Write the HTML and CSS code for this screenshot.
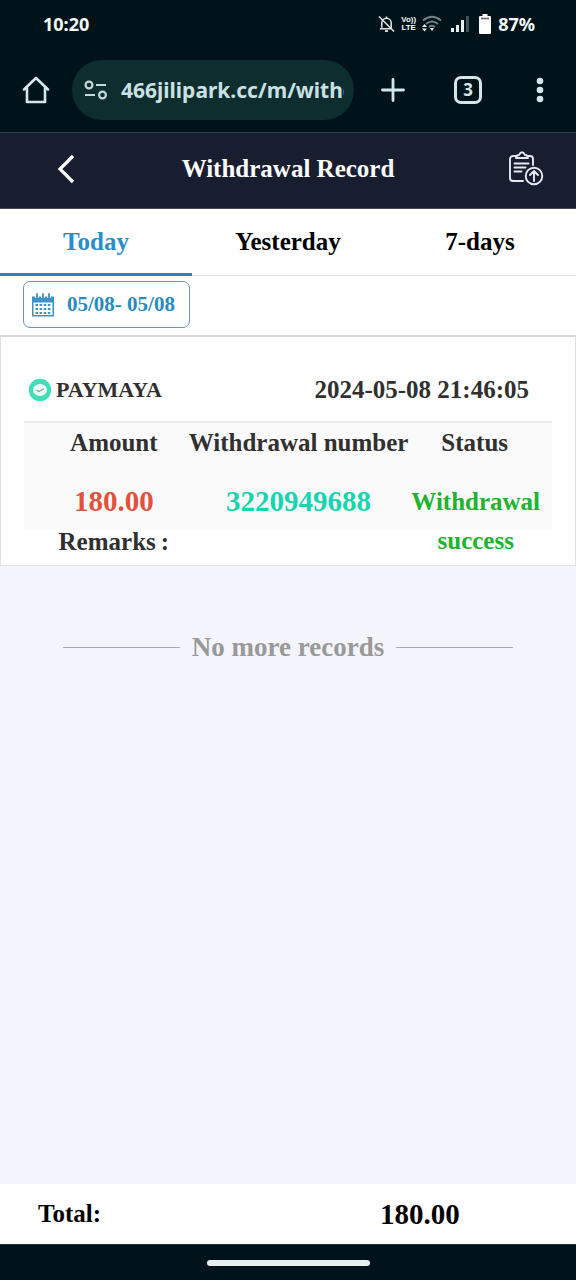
FILE: index.html
```html
<!DOCTYPE html>
<html lang="en">
<head>
<meta charset="utf-8">
<meta name="viewport" content="width=device-width, initial-scale=1">
<title>Withdrawal Record</title>
<link rel="stylesheet" href="styles.css">
</head>
<body>
<div class="status-bar">
  <span class="clock">10:20</span>
  <div class="status-icons">
    <svg width="17" height="18" viewBox="0 0 18 18" fill="none" stroke="#dfe9ea" stroke-width="1.6"><path d="M4 13V8a5 5 0 0 1 10 0v5M2 14h13M9 1v2M1 1l16 16"/><path d="M7.500 16.500h3" stroke-width="2"/></svg>
    <span class="volte"><span>Vo))</span><span>LTE</span></span>
    <svg class="wifi" width="20" height="18" viewBox="0 0 20 18" fill="none" stroke="#718086" stroke-width="1.800"><path d="M1 5.500Q10-2 19 5.500M4 9q6-5 12 0M7 12q3-2.500 6 0"/><path d="M0 12l2.500-3L5 12zM0 13.500h5L2.500 16.500zM8 13h4l-2 3z" fill="#e8f1f2" stroke="none"/></svg>
    <svg class="signal" width="18" height="16" viewBox="0 0 18 16" fill="#e8f1f2"><path d="M0 12h3v4H0zM5 9h3v7H5zM10 4h3v12h-3z"/><path d="M15 0h3v16h-3z" fill="#435158"/></svg>
    <svg class="battery" width="12" height="20" viewBox="0 0 12 20"><path d="M3.500 0h5v2H11a1 1 0 0 1 1 1v16a1 1 0 0 1-1 1H1a1 1 0 0 1-1-1V3a1 1 0 0 1 1-1h2.500z" fill="#fff"/><path d="M2 4.500h8" stroke="#58666b" stroke-width="1.500"/></svg>
    <span class="charge">87%</span>
  </div>
</div>

<div class="browser-bar">
  <button class="tool" aria-label="Home"><svg width="28" height="28" viewBox="0 0 28 28" fill="none" stroke="#d3e6ea" stroke-width="2.600" stroke-linejoin="round" stroke-linecap="round"><path d="M5 11.500L2 13.500 14 2l12 11.500-3-2M5 11.500V26h18V11.500"/></svg></button>
  <div class="address">
    <svg width="24" height="20" viewBox="0 0 24 20" fill="none" stroke="#c4dad9" stroke-width="2.200"><circle cx="5" cy="5" r="3.400"/><path d="M12 5h10M1 15h10"/><circle cx="18.500" cy="15" r="3.400"/></svg>
    <input class="url" type="text" aria-label="Address" value="466jilipark.cc/m/withdraw">
  </div>
  <button class="tool" aria-label="New tab"><svg width="24" height="24" viewBox="0 0 24 24" stroke="#d3e6ea" stroke-width="2.800" stroke-linecap="round"><path d="M12 1.500v21M1.500 12h21"/></svg></button>
  <button class="tool" aria-label="Open tabs"><span class="tab-count">3</span></button>
  <button class="tool" aria-label="Menu"><svg width="8" height="26" viewBox="0 0 8 26" fill="#d3e6ea"><circle cx="4" cy="4" r="3.300"/><circle cx="4" cy="13" r="3.300"/><circle cx="4" cy="22" r="3.300"/></svg></button>
</div>

<header class="page-head">
  <button class="head-button head-back" aria-label="Back"><svg width="20" height="30" viewBox="0 0 20 30" fill="none" stroke="#fff" stroke-width="3.200"><path d="M17 2L4 15l13 13"/></svg></button>
  <h1 class="title">Withdrawal Record</h1>
  <button class="head-button head-export" aria-label="Export record"><svg width="36" height="36" viewBox="0 0 36 36" fill="none" stroke="#e6e8f2" stroke-width="1.900" stroke-linecap="round" stroke-linejoin="round"><path d="M8 5H5a3 3 0 0 0-3 3v19a3 3 0 0 0 3 3h10M20 5h2a3 3 0 0 1 3 3v6"/><path d="M8 7q0-3 3-3 3-5.500 6 0 3 0 3 3zM6.500 12.500h14M6.500 16.500h11M6.500 20.500h7"/><circle cx="26" cy="25" r="8.300"/><path d="M26 30V20M22 24l4-4 4 4"/></svg></button>
</header>

<nav class="tabs">
  <button class="tab tab-active">Today</button>
  <button class="tab">Yesterday</button>
  <button class="tab">7-days</button>
</nav>

<div class="filter">
  <button class="date-range">
    <svg width="22" height="24" viewBox="0 0 22 24"><path d="M0 3.500h22v20H0z" fill="#3c91c8"/><path d="M1.500 9.500h19V22h-19z" fill="#fff"/><path d="M3.500 12h15M3.500 16h15M3.500 20h15" stroke="#3c91c8" stroke-width="2.200" stroke-dasharray="2.500 1.600"/><path d="M5 1v4M11 1v4M17 1v4" stroke="#fff" stroke-width="3.600"/><path d="M5 1v4M11 1v4M17 1v4" stroke="#3c91c8" stroke-width="1.800" stroke-linecap="round"/></svg>
    <span>05/08- 05/08</span>
  </button>
</div>

<main class="records">
  <article class="card">
    <div class="card-head">
      <svg width="24" height="24" viewBox="0 0 24 24"><circle cx="12" cy="12" r="11.200" fill="#42dcb9"/><ellipse cx="12" cy="12" rx="7" ry="6" fill="#f1fffb"/><path d="M8.500 12l2.500 1.500 5-3" fill="none" stroke="#72a99c" stroke-width="1.400"/></svg>
      <h2 class="method">PAYMAYA</h2>
      <time class="when" datetime="2024-05-08T21:46:05">2024-05-08 21:46:05</time>
    </div>
    <table class="details">
      <colgroup><col class="col-amount"><col class="col-number"><col class="col-status"></colgroup>
      <thead><tr><th>Amount</th><th>Withdrawal number</th><th>Status</th></tr></thead>
      <tbody>
        <tr class="values"><td class="amount">180.00</td><td class="number">3220949688</td><td class="status" rowspan="2">Withdrawal success</td></tr>
        <tr class="remarks"><td>Remarks&thinsp;:</td><td></td></tr>
      </tbody>
    </table>
  </article>
  <p class="end"><span>No more records</span></p>
</main>

<footer class="total"><span>Total:</span><span class="sum">180.00</span></footer>
<div class="gesture"><div class="pill"></div></div>
</body>
</html>
```
FILE: styles.css
```css
* { box-sizing: border-box; }
body {
  margin: 0;
  min-height: 100vh;
  display: flex;
  flex-direction: column;
  background: #f4f4fc;
  color: #303030;
  font-family: "Liberation Serif", serif;
  font-weight: bold;
  font-size: 25px;
}
button { border: 0; padding: 0; background: none; font: inherit; color: inherit; }
svg { display: block; flex: none; }
h1, h2, p { margin: 0; font-size: inherit; }

.status-bar {
  height: 48px;
  padding: 0 41px 0 43px;
  display: flex;
  align-items: center;
  justify-content: space-between;
  background: #01131a;
  color: #f4fbfb;
  font-family: "Noto Sans", sans-serif;
  font-size: 18px;
}
.status-icons { display: flex; align-items: center; gap: 6px; }
.volte {
  display: flex;
  flex-direction: column;
  align-items: center;
  font-family: "Liberation Sans", sans-serif;
  font-size: 8px;
  line-height: 8px;
}
.signal { margin-left: 3px; }
.battery { margin-left: 4px; }
.charge { margin-left: 1px; }

.browser-bar {
  height: 85px;
  display: flex;
  align-items: center;
  background: #01131a;
  border-bottom: 1px solid #294451;
}
.tool {
  width: 72px;
  height: 60px;
  display: flex;
  align-items: center;
  justify-content: center;
}
.address {
  flex: 1;
  min-width: 0;
  height: 60px;
  padding: 0 10px 0 12px;
  display: flex;
  align-items: center;
  gap: 13px;
  border-radius: 30px;
  background: #0d2d2e;
}
.address + .tool { width: 78px; }
.url {
  flex: 1;
  min-width: 0;
  padding: 0;
  border: 0;
  background: none;
  color: #cbe0e2;
  font: bold 21px "Noto Sans", sans-serif;
}
.tab-count {
  width: 28px;
  height: 28px;
  border: 3px solid #d3e6ea;
  border-radius: 7px;
  color: #d3e6ea;
  font: bold 17px/22px "Noto Sans", sans-serif;
}

.page-head {
  height: 76px;
  padding: 0 32px 4px;
  display: grid;
  grid-template-columns: 1fr auto 1fr;
  align-items: center;
  background: #191d30;
  color: #fff;
  border-bottom: 1px solid #454856;
}
.head-button { height: 60px; display: flex; align-items: center; }
.head-back { width: 68px; justify-content: center; }
.head-export { justify-content: flex-end; }

.tabs {
  display: grid;
  grid-template-columns: repeat(3, 1fr);
  background: #fff;
}
.tab {
  height: 67px;
  border-bottom: 1px solid #dddddf;
  color: #000;
}
.tab-active {
  padding-top: 2px;
  border-bottom: 3px solid #337fbc;
  color: #278dcc;
}

.filter {
  padding: 5px 23px 7px;
  background: #fff;
  border-bottom: 2px solid #d8d8d8;
}
.date-range {
  width: 167px;
  height: 47px;
  padding-left: 8px;
  display: flex;
  align-items: center;
  gap: 13px;
  border: 1px solid #6798b0;
  border-radius: 7px;
  color: #278bc0;
  font-size: 21px;
  white-space: nowrap;
}

.records { flex: 1; }
.card {
  padding: 22px 23px 0;
  background: #fff;
  border: 1px solid #e2e2e4;
  border-top: 0;
}
.card-head {
  height: 62px;
  padding: 0 23px 0 4px;
  display: flex;
  align-items: center;
  gap: 4px;
}
.method { font-size: 22px; }
.when { margin-left: auto; }
.details {
  width: 100%;
  table-layout: fixed;
  border-collapse: collapse;
  border-top: 2px solid #e9e9eb;
  background: linear-gradient(#fafafa, #fafafa) no-repeat top / 100% 107px;
  text-align: center;
}
.col-amount { width: 31%; }
.col-number { width: 42%; }
.col-status { width: 27%; }
.details th, .details td { padding: 0; white-space: nowrap; }
.details th { height: 40px; }
.details tr > :first-child { padding-left: 16px; }
.details th:last-child { padding-right: 12px; }
.values { height: 66px; }
.details .amount, .details .number {
  padding-top: 12px;
  font-size: 29px;
}
.details .amount { color: #e2513a; }
.details .number { color: #18d5b0; }
.details .status {
  padding: 20px 10px 0 0;
  color: #20b32e;
  line-height: 39px;
  vertical-align: top;
  white-space: normal;
}
.remarks { height: 37px; line-height: 28px; vertical-align: top; }

.end {
  padding: 65px 63px 0;
  display: flex;
  align-items: center;
  gap: 12px;
  color: #999;
  font-size: 27px;
  line-height: 32px;
}
.end::before, .end::after {
  content: "";
  flex: 1;
  height: 1px;
  background: #a8a8aa;
}

.total {
  height: 60px;
  padding: 0 38px;
  display: grid;
  grid-template-columns: 342px 1fr;
  align-items: center;
  background: #fff;
  color: #000;
}
.sum { font-size: 29px; }
.gesture {
  height: 36px;
  display: flex;
  align-items: center;
  justify-content: center;
  background: #01131a;
  border-top: 1px solid #263338;
}
.pill { width: 163px; height: 6px; border-radius: 3px; background: #e6eef1; }
```
